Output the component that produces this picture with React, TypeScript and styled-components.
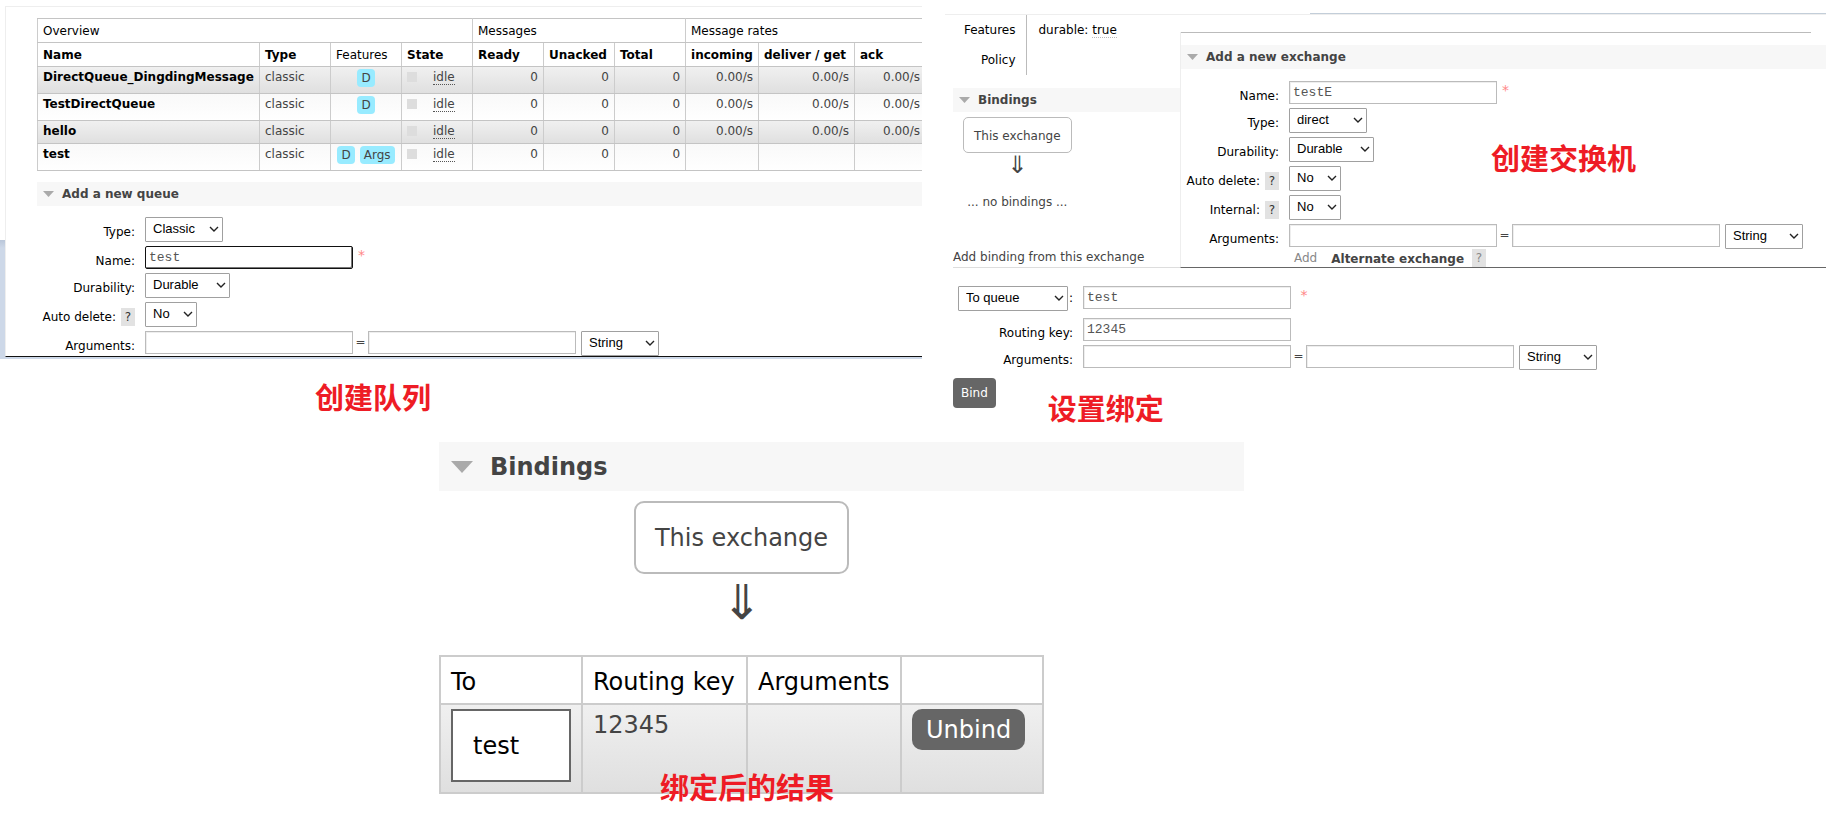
import React from "react";
import styled, { createGlobalStyle } from "styled-components";

const sans = '"DejaVu Sans", Verdana, sans-serif';
const cjk = '"Noto Sans CJK SC", "Microsoft YaHei", sans-serif';

const GlobalStyle = createGlobalStyle`
  *, *::before, *::after { box-sizing: border-box; }
  body {
    margin: 0;
    background: #fff;
    color: #444;
    font: 12px/18px ${sans};
  }
  h2, h3, p { margin: 0; }
  a { color: inherit; text-decoration: none; }
`;

const Page = styled.main`
  display: flex;
  flex-direction: column;
  gap: 20px;
  padding-bottom: 24px;
`;

const TopRow = styled.div`
  display: grid;
  grid-template-columns: minmax(0, 922fr) minmax(0, 904fr);
`;

const Caption = styled.p`
  color: #ee1c25;
  font: bold 29px/30px ${cjk};
  white-space: nowrap;
`;

/* ---------- queues ---------- */

const QueueColumn = styled.section`
  display: flex;
  flex-direction: column;
  gap: 22px;
`;

const QueueBackdrop = styled.div`
  padding: 6px 0 2px 5px;
  background: linear-gradient(#fff 240px, #b9c6d9 240px, #cdd8e8 248px);
`;

const QueueSheet = styled.div`
  padding: 11px 0 0 31px;
  overflow: hidden;
  background: #fff;
  border: solid #eee;
  border-width: 1px 0 0 1px;
  border-bottom: 1px solid #111;
`;

const QueueCaption = styled(Caption)`
  padding-left: 315px;
`;

const QueueTable = styled.table`
  width: 888px;
  table-layout: fixed;
  border-collapse: collapse;
  white-space: nowrap;
`;

const HeadCell = styled.th<{ $plain?: boolean }>`
  height: 24px;
  padding: 2px 5px 1px;
  border: 1px solid #c4c4c4;
  border-inline: 1px solid #ccc;
  color: #000;
  font-weight: ${(p) => (p.$plain ? "normal" : "bold")};
  line-height: 18px;
  text-align: left;
`;

const QueueRow = styled.tr`
  background: linear-gradient(#f9f9f9, #fff);
  &:nth-child(odd) { background: linear-gradient(#f0f0f0, #dfdfdf); }
`;

const Cell = styled.td<{ $align?: string; $strong?: boolean }>`
  height: 23px;
  padding: 1px 5px 2px;
  border: 1px solid #c4c4c4;
  border-inline: 1px solid #ccc;
  color: ${(p) => (p.$strong ? "#000" : "#444")};
  font-weight: ${(p) => (p.$strong ? "bold" : "normal")};
  line-height: 18px;
  text-align: ${(p) => p.$align ?? "left"};
  vertical-align: top;
`;

const Badges = styled.div`
  display: flex;
  justify-content: center;
  gap: 5px;
  padding: 1px 0 4px;
`;

const Badge = styled.abbr`
  padding: 0 4px;
  border-radius: 4px;
  background: #98ebff;
`;

const State = styled.div`
  display: flex;
  align-items: center;
  gap: 16px;
  height: 18px;
  &::before {
    content: "";
    width: 10px;
    height: 10px;
    background: #ddd;
  }
`;

const Dotted = styled.span<{ $faint?: boolean }>`
  border-bottom: 1px dotted ${(p) => (p.$faint ? "#bbb" : "#555")};
  line-height: 14px;
`;

/* ---------- shared parts ---------- */

const SectionBar = styled.h2<{ $large?: boolean }>`
  display: flex;
  align-items: center;
  gap: ${(p) => (p.$large ? 17 : 8)}px;
  height: ${(p) => (p.$large ? 49 : 24)}px;
  padding-left: ${(p) => (p.$large ? 12 : 6)}px;
  background: #f7f7f7;
  color: #444;
  font-size: ${(p) => (p.$large ? 24 : 12)}px;
  font-weight: bold;
  svg { width: ${(p) => (p.$large ? 22 : 11)}px; }
`;

const QueueBar = styled(SectionBar)`
  margin: 11px 0;
`;

const Form = styled.form<{ $label: number }>`
  display: grid;
  grid-template-columns: ${(p) => p.$label}px max-content;
  gap: 4px 10px;
`;

const LabelCell = styled.div`
  display: flex;
  align-items: center;
  justify-content: flex-end;
  gap: 5px;
  height: 23px;
  padding-top: 7px;
  color: #000;
  white-space: nowrap;
`;

const Help = styled.button<{ $muted?: boolean }>`
  flex: none;
  width: 14px;
  height: 18px;
  padding: 0;
  border: 0;
  background: #e2e2e2;
  color: ${(p) => (p.$muted ? "#888" : "#333")};
  font: 12px/18px ${sans};
`;

const Controls = styled.div`
  display: flex;
  align-items: flex-start;
`;

const TextBox = styled.input<{ $focused?: boolean }>`
  width: 208px;
  height: 23px;
  padding: 0 3px 1px;
  border: 1px solid ${(p) => (p.$focused ? "#111" : "#bbb")};
  border-radius: ${(p) => (p.$focused ? 2 : 0)}px;
  box-shadow: ${(p) => (p.$focused ? "inset -1px -1px #777" : "inset 1px 1px #eee")};
  background: #fff;
  color: #555;
  font: 13px/16px "Liberation Mono", "Courier New", monospace;
  outline: 0;
`;

const Equals = styled.span`
  width: 15px;
  line-height: 23px;
  text-align: center;
`;

const Required = styled.span`
  padding-left: 5px;
  color: #f88;
  font-size: 14px;
`;

const SelectBox = styled.span<{ $width: number; $gap?: number }>`
  position: relative;
  flex: none;
  width: ${(p) => p.$width}px;
  margin-left: ${(p) => p.$gap ?? 0}px;
  svg {
    position: absolute;
    right: 4px;
    top: 9px;
    pointer-events: none;
  }
`;

const NativeSelect = styled.select`
  display: block;
  width: 100%;
  height: 25px;
  padding: 0 7px 1px;
  appearance: none;
  border: 1px solid #a0a0a0;
  border-radius: 1px;
  background: #fff;
  color: #000;
  font: 13px/20px "Liberation Sans", Arial, sans-serif;
`;

const ExchangeBox = styled.div<{ $large?: boolean }>`
  padding: ${(p) => (p.$large ? "18px 19px 16px" : "9px 10px 7px")};
  border: ${(p) => (p.$large ? 2 : 1)}px solid #bbb;
  border-radius: ${(p) => (p.$large ? 10 : 5)}px;
  line-height: ${(p) => (p.$large ? 35 : 18)}px;
  white-space: nowrap;
`;

const Arrow = styled.span<{ $large?: boolean }>`
  font-size: ${(p) => (p.$large ? 48 : 24)}px;
  line-height: ${(p) => (p.$large ? 48 : 24)}px;
`;

const DarkButton = styled.button<{ $large?: boolean }>`
  padding: ${(p) => (p.$large ? "4px 14px 2px" : "6px 8px")};
  border: 0;
  border-radius: ${(p) => (p.$large ? 10 : 4)}px;
  background: #666;
  color: #fff;
  font: ${(p) => (p.$large ? "24px/35px" : "12px/18px")} ${sans};
`;

/* ---------- binding form ---------- */

const BindColumn = styled.section`
  position: relative;
  padding: 14px 0 0 23px;
`;

const BindSheet = styled.div`
  display: flex;
  flex-direction: column;
  padding-left: 8px;
  border-top: 1px solid #eee;
`;

const TitleEdge = styled.div`
  position: absolute;
  top: 13px;
  left: 388px;
  right: 0;
  height: 1px;
  background: #c3ced9;
`;

const Details = styled.table`
  align-self: flex-start;
  margin-bottom: 13px;
  border-collapse: collapse;
  th {
    width: 73px;
    height: 30px;
    padding: 0 10px 0 0;
    border-right: 1px solid #bbb;
    color: #000;
    font-weight: normal;
    text-align: right;
  }
  td { padding: 0 0 0 12px; color: #000; }
`;

const Flow = styled.div`
  display: flex;
  flex-direction: column;
  align-items: center;
  align-self: flex-start;
  padding: 5px 0 0 10px;
`;

const NoBindings = styled.p`
  padding: 16px 0 37px;
`;

const SubHeading = styled.h3`
  padding-bottom: 1px;
  margin-bottom: 18px;
  border-bottom: 1px solid #ddd;
  font-size: 12px;
  font-weight: normal;
`;

const TargetRow = styled.div`
  display: flex;
  gap: 1px;
  padding: 0 0 3px 5px;
  color: #000;
  line-height: 25px;
`;

const Actions = styled.div`
  display: flex;
  align-items: flex-start;
  gap: 52px;
  padding-top: 8px;
  ${Caption} { padding-top: 14px; }
`;

/* ---------- exchange window ---------- */

const ExchangeWindow = styled.section`
  position: absolute;
  top: 32px;
  left: 258px;
  right: 0;
  height: 236px;
  padding-top: 13px;
  overflow: hidden;
  background: #fff;
  border-left: 1px solid #eee;
  border-bottom: 1px solid #666;
  ${Form} { margin-top: 12px; }
  &::before {
    content: "";
    position: absolute;
    top: 0;
    left: 0;
    right: 15px;
    height: 1px;
    background: #bbb;
  }
`;

const ExchangeCaption = styled(Caption)`
  position: absolute;
  top: 110px;
  left: 310px;
`;

const AddLine = styled.div`
  display: flex;
  align-items: center;
  padding-left: 113px;
  line-height: 16px;
  a { color: #888; }
  strong { padding: 2px 8px 0 14px; }
`;

/* ---------- binding result ---------- */

const ResultSection = styled.section`
  width: 805px;
  margin-left: 439px;
  font-size: 24px;
`;

const ResultFlow = styled.div`
  position: relative;
  display: flex;
  flex-direction: column;
  align-items: center;
  width: max-content;
  padding-top: 10px;
  ${Arrow} { padding: 4px 0; margin-bottom: 25px; }
`;

const ResultTable = styled.table`
  width: 605px;
  table-layout: fixed;
  border-collapse: collapse;
  line-height: 32px;
  white-space: nowrap;
  th, td {
    border: 2px solid #ccc;
    text-align: left;
    vertical-align: top;
  }
  th {
    padding: 8px 10px 3px;
    color: #000;
    font-weight: normal;
    line-height: 35px;
  }
  td { padding: 4px 10px 10px; }
  tbody tr { background: linear-gradient(#f0f0f0, #dfdfdf); }
`;

const QueueLink = styled.a`
  display: block;
  padding: 18px 20px 16px;
  border: 2px solid #666;
  background: #fff;
  line-height: 35px;
  && { color: #000; }
`;

const ResultCaption = styled(Caption)`
  position: absolute;
  left: 221px;
  bottom: -7px;
`;

const Triangle = () => (
  <svg viewBox="0 0 22 12" aria-hidden="true">
    <path d="M0 0H22L11 12Z" fill="#aaa" />
  </svg>
);

type SelectProps = { id?: string; label?: string; value: string; width: number; gap?: number };

const Select = ({ id, label, value, width, gap }: SelectProps) => (
  <SelectBox $width={width} $gap={gap}>
    <NativeSelect id={id} aria-label={label} defaultValue={value}>
      <option>{value}</option>
    </NativeSelect>
    <svg width="10" height="7" viewBox="0 0 10 7" aria-hidden="true">
      <path d="M1 1L5 5L9 1" fill="none" stroke="#222" strokeWidth="1.4" />
    </svg>
  </SelectBox>
);

type FieldProps = { id: string; label: string; help?: boolean; children: React.ReactNode };

const Field = ({ id, label, help, children }: FieldProps) => (
  <>
    <LabelCell>
      <label htmlFor={id}>{label}</label>
      {help && <Help type="button">?</Help>}
    </LabelCell>
    <Controls>{children}</Controls>
  </>
);

const ArgumentControls = ({ id }: { id: string }) => (
  <>
    <TextBox id={id} />
    <Equals>=</Equals>
    <TextBox aria-label="Argument value" />
    <Select label="Argument type" value="String" width={78} gap={5} />
  </>
);

const columnWidths = [222, 71, 71, 71, 71, 71, 71, 73, 96, 71];
const heads = ["Name", "Type", "Features", "State", "Ready", "Unacked", "Total", "incoming", "deliver / get", "ack"];
const queues = [
  { name: "DirectQueue_DingdingMessage", features: ["D"], rate: "0.00/s" },
  { name: "TestDirectQueue", features: ["D"], rate: "0.00/s" },
  { name: "hello", features: [], rate: "0.00/s" },
  { name: "test", features: ["D", "Args"], rate: "" },
];

const Queues = () => (
  <QueueColumn>
    <QueueBackdrop>
      <QueueSheet>
        <QueueTable>
          <colgroup>
            {columnWidths.map((w, i) => (
              <col key={i} width={w} />
            ))}
          </colgroup>
          <thead>
            <tr>
              <HeadCell $plain colSpan={4}>Overview</HeadCell>
              <HeadCell $plain colSpan={3}>Messages</HeadCell>
              <HeadCell $plain colSpan={3}>Message rates</HeadCell>
            </tr>
            <tr>
              {heads.map((h) => (
                <HeadCell key={h} $plain={h === "Features"}>{h}</HeadCell>
              ))}
            </tr>
          </thead>
          <tbody>
            {queues.map((q) => (
              <QueueRow key={q.name}>
                <Cell $strong><a href="#queue">{q.name}</a></Cell>
                <Cell>classic</Cell>
                <Cell>
                  {q.features.length > 0 && (
                    <Badges>{q.features.map((f) => <Badge key={f}>{f}</Badge>)}</Badges>
                  )}
                </Cell>
                <Cell><State><Dotted>idle</Dotted></State></Cell>
                {[0, 1, 2].map((i) => <Cell key={i} $align="right">0</Cell>)}
                {[0, 1, 2].map((i) => <Cell key={i} $align="right">{q.rate}</Cell>)}
              </QueueRow>
            ))}
          </tbody>
        </QueueTable>
        <QueueBar><Triangle />Add a new queue</QueueBar>
        <Form $label={98}>
          <Field id="q-type" label="Type:"><Select id="q-type" value="Classic" width={78} /></Field>
          <Field id="q-name" label="Name:">
            <TextBox id="q-name" $focused defaultValue="test" />
            <Required>*</Required>
          </Field>
          <Field id="q-dur" label="Durability:"><Select id="q-dur" value="Durable" width={85} /></Field>
          <Field id="q-auto" label="Auto delete:" help><Select id="q-auto" value="No" width={52} /></Field>
          <Field id="q-args" label="Arguments:"><ArgumentControls id="q-args" /></Field>
        </Form>
      </QueueSheet>
    </QueueBackdrop>
    <QueueCaption>创建队列</QueueCaption>
  </QueueColumn>
);

const Exchange = () => (
  <ExchangeWindow>
    <SectionBar><Triangle />Add a new exchange</SectionBar>
    <Form $label={98}>
      <Field id="e-name" label="Name:">
        <TextBox id="e-name" defaultValue="testE" />
        <Required>*</Required>
      </Field>
      <Field id="e-type" label="Type:"><Select id="e-type" value="direct" width={78} /></Field>
      <Field id="e-dur" label="Durability:"><Select id="e-dur" value="Durable" width={85} /></Field>
      <Field id="e-auto" label="Auto delete:" help><Select id="e-auto" value="No" width={52} /></Field>
      <Field id="e-int" label="Internal:" help><Select id="e-int" value="No" width={52} /></Field>
      <Field id="e-args" label="Arguments:"><ArgumentControls id="e-args" /></Field>
    </Form>
    <AddLine>
      <a href="#add">Add</a>
      <strong>Alternate exchange</strong>
      <Help type="button" $muted>?</Help>
    </AddLine>
    <ExchangeCaption>创建交换机</ExchangeCaption>
  </ExchangeWindow>
);

const Binding = () => (
  <BindColumn>
    <BindSheet>
      <Details>
        <tbody>
          <tr>
            <th scope="row">Features</th>
            <td>durable: <Dotted $faint>true</Dotted></td>
          </tr>
          <tr>
            <th scope="row">Policy</th>
            <td />
          </tr>
        </tbody>
      </Details>
      <SectionBar><Triangle />Bindings</SectionBar>
      <Flow>
        <ExchangeBox>This exchange</ExchangeBox>
        <Arrow>⇓</Arrow>
        <NoBindings>... no bindings ...</NoBindings>
      </Flow>
      <SubHeading>Add binding from this exchange</SubHeading>
      <Form $label={120}>
        <TargetRow>
          <Select label="Destination kind" value="To queue" width={110} />:
        </TargetRow>
        <Controls>
          <TextBox aria-label="Destination" defaultValue="test" />
          <Required>&nbsp;*</Required>
        </Controls>
        <Field id="b-key" label="Routing key:"><TextBox id="b-key" defaultValue="12345" /></Field>
        <Field id="b-args" label="Arguments:"><ArgumentControls id="b-args" /></Field>
      </Form>
      <Actions>
        <DarkButton type="button">Bind</DarkButton>
        <Caption>设置绑定</Caption>
      </Actions>
    </BindSheet>
    <TitleEdge />
    <Exchange />
  </BindColumn>
);

const Result = () => (
  <ResultSection>
    <SectionBar $large><Triangle />Bindings</SectionBar>
    <ResultFlow>
      <ExchangeBox $large>This exchange</ExchangeBox>
      <Arrow $large>⇓</Arrow>
      <ResultTable>
        <colgroup>
          <col width={142} />
          <col width={165} />
          <col width={154} />
          <col width={142} />
        </colgroup>
        <thead>
          <tr>
            <th>To</th>
            <th>Routing key</th>
            <th>Arguments</th>
            <th aria-label="Actions" />
          </tr>
        </thead>
        <tbody>
          <tr>
            <td><QueueLink href="#test">test</QueueLink></td>
            <td>12345</td>
            <td />
            <td><DarkButton type="button" $large>Unbind</DarkButton></td>
          </tr>
        </tbody>
      </ResultTable>
      <ResultCaption>绑定后的结果</ResultCaption>
    </ResultFlow>
  </ResultSection>
);

export default function App() {
  return (
    <>
      <GlobalStyle />
      <Page>
        <TopRow>
          <Queues />
          <Binding />
        </TopRow>
        <Result />
      </Page>
    </>
  );
}
